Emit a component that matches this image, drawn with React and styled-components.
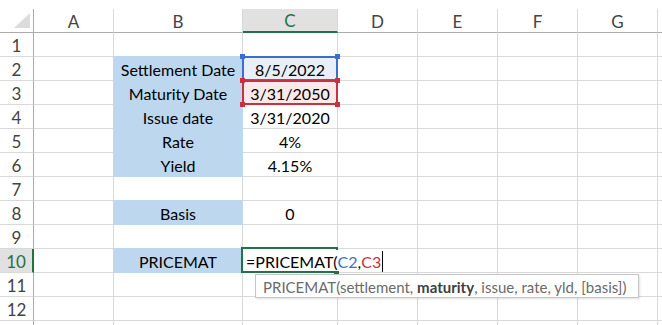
import styled, { createGlobalStyle } from 'styled-components';

const GlobalStyle = createGlobalStyle`
  body {
    margin: 0;
    background: #fff;
    font-family: Lato, "Liberation Sans", sans-serif;
  }
`;

const GRID = '#d9d9d9';
const HEAD_LINE = '#ababab';
const GREEN = '#217346';
const BLUE_FILL = '#bdd7ee';

const Sheet = styled.div`
  display: grid;
  grid-template-columns: 34px 80px 129px 95px 80px 80px 80px 80px 80px;
  grid-auto-rows: 24px;
  padding-top: 9px;
  width: 662px;
  height: 325px;
  box-sizing: border-box;
  overflow: hidden;
  font-size: 16px;
`;

const Corner = styled.div`
  position: relative;
  box-sizing: border-box;
  border-right: 1px solid ${HEAD_LINE};
  border-bottom: 1px solid ${HEAD_LINE};
  &::after {
    content: '';
    position: absolute;
    right: 3px;
    bottom: 4px;
    width: 16px;
    height: 15px;
    background: #dcdcdc;
    clip-path: polygon(100% 0, 100% 100%, 0 100%);
  }
`;

const ColHead = styled.div`
  box-sizing: border-box;
  display: flex;
  align-items: center;
  justify-content: center;
  padding-top: 1px;
  font-size: 17px;
  border-right: 1px solid ${GRID};
  border-bottom: ${(p) => (p.$active ? `2px solid ${GREEN}` : `1px solid ${HEAD_LINE}`)};
  background: ${(p) => (p.$active ? '#e1e1e1' : '#fff')};
  color: ${(p) => (p.$active ? GREEN : '#444')};
`;

const RowHead = styled.div`
  box-sizing: border-box;
  display: flex;
  align-items: center;
  justify-content: center;
  padding-top: 1px;
  font-size: 17px;
  border-bottom: 1px solid ${GRID};
  border-right: ${(p) => (p.$active ? `2px solid ${GREEN}` : `1px solid ${HEAD_LINE}`)};
  background: ${(p) => (p.$active ? '#e1e1e1' : '#fff')};
  color: ${(p) => (p.$active ? GREEN : '#444')};
`;

const Cell = styled.div`
  position: relative;
  box-sizing: border-box;
  display: flex;
  align-items: center;
  justify-content: center;
  padding-top: 2px;
  white-space: nowrap;
  color: #000;
  background: ${(p) => p.$fill || '#fff'};
  border-right: 1px solid ${(p) => p.$fill || GRID};
  border-bottom: 1px solid ${(p) => p.$fill || GRID};
  box-shadow: ${(p) => (p.$fill ? `-1px -1px 0 ${p.$fill}` : 'none')};
`;

const RefBox = styled.div`
  position: absolute;
  left: -1px;
  top: -1px;
  right: -1px;
  bottom: -1px;
  border: 2px solid ${(p) => p.$color};
  z-index: ${(p) => p.$z};
  pointer-events: none;
`;

const Handle = styled.span`
  position: absolute;
  width: 5px;
  height: 5px;
  background: ${(p) => p.$color};
  ${(p) => (p.$top ? 'top: -4px;' : 'bottom: -4px;')}
  ${(p) => (p.$left ? 'left: -4px;' : 'right: -4px;')}
`;

const EditBox = styled.div`
  position: absolute;
  left: -2px;
  top: -2px;
  right: -1px;
  bottom: -1px;
  border: 2px solid ${GREEN};
  z-index: 3;
`;

const FillHandle = styled.span`
  position: absolute;
  right: -3px;
  bottom: -4px;
  width: 5px;
  height: 4px;
  background: ${GREEN};
`;

const Editor = styled.div`
  position: absolute;
  left: 3px;
  top: 1px;
  bottom: 1px;
  display: flex;
  align-items: center;
  padding-top: 2px;
  padding-right: 1px;
  background: #fff;
  z-index: 4;
`;

const Ref = styled.span`
  color: ${(p) => p.$color};
`;

const Caret = styled.span`
  display: inline-block;
  width: 1px;
  height: 21px;
  margin-left: 1px;
  background: #000;
`;

const Tip = styled.div`
  position: absolute;
  left: 12px;
  top: 25px;
  width: 384px;
  height: 24px;
  box-sizing: border-box;
  display: flex;
  align-items: center;
  padding: 1px 0 0 7px;
  font-size: 15px;
  background: #fff;
  border: 1px solid #c6c6c6;
  box-shadow: 1px 1px 2px rgba(0, 0, 0, 0.12);
  color: #6b6b6b;
  z-index: 5;
  b {
    color: #404040;
  }
`;

// H is only a sliver at the right edge, its letter falls outside the window
const COLS = ['A', 'B', 'C', 'D', 'E', 'F', 'G', ''];

const rows = {
  2: ['Settlement Date', '8/5/2022'],
  3: ['Maturity Date', '3/31/2050'],
  4: ['Issue date', '3/31/2020'],
  5: ['Rate', '4%'],
  6: ['Yield', '4.15%'],
  8: ['Basis', '0'],
  10: ['PRICEMAT', null],
};

const refs = {
  2: { color: '#3c6fcb', fill: '#e8eff9', z: 1 },
  3: { color: '#c8323e', fill: '#fbe9ea', z: 2 },
};

const renderC = (r) => {
  if (r === 10) {
    return (
      <Cell key="C">
        <EditBox>
          <FillHandle />
        </EditBox>
        <Editor>
          =PRICEMAT(<Ref $color="#3c6fcb">C2</Ref>,<Ref $color="#c8323e">C3</Ref>
          <Caret />
        </Editor>
        <Tip>
          PRICEMAT(settlement,&nbsp;<b>maturity</b>, issue, rate, yld, [basis])
        </Tip>
      </Cell>
    );
  }
  const ref = refs[r];
  const value = rows[r] ? rows[r][1] : '';
  return (
    <Cell key="C" $fill={ref && ref.fill}>
      {value}
      {ref && (
        <RefBox $color={ref.color} $z={ref.z}>
          <Handle $color={ref.color} $top $left />
          <Handle $color={ref.color} $top />
          {r === 3 && <Handle $color={ref.color} $left />}
          {r === 3 && <Handle $color={ref.color} />}
        </RefBox>
      )}
    </Cell>
  );
};

const App = () => {
  const rowNums = Array.from({ length: 13 }, (_, i) => i + 1);
  return (
    <>
      <GlobalStyle />
      <Sheet>
        <Corner />
        {COLS.map((c, i) => (
          <ColHead key={i} $active={c === 'C'}>
            {c}
          </ColHead>
        ))}
        {rowNums.map((r) => [
          <RowHead key={`h${r}`} $active={r === 10}>
            {r < 13 ? r : ''}
          </RowHead>,
          <Cell key={`a${r}`} />,
          <Cell key={`b${r}`} $fill={rows[r] ? BLUE_FILL : null}>
            {rows[r] ? rows[r][0] : ''}
          </Cell>,
          <div key={`c${r}`} style={{ display: 'contents' }}>
            {renderC(r)}
          </div>,
          ...['D', 'E', 'F', 'G', 'H'].map((c) => <Cell key={`${c}${r}`} />),
        ])}
      </Sheet>
    </>
  );
};

export default App;
